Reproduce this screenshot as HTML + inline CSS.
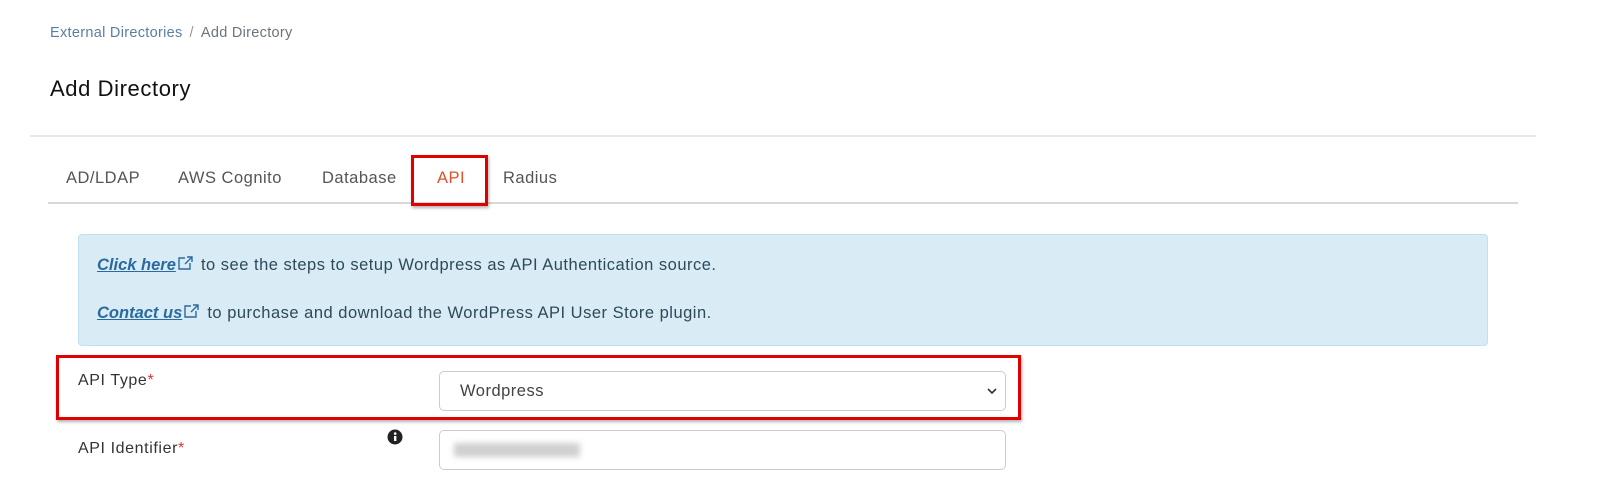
<!DOCTYPE html>
<html><head><meta charset="utf-8"><style>
*{box-sizing:border-box;margin:0;padding:0}
body{width:1609px;height:498px;background:#fff;font-family:"Liberation Sans",sans-serif;position:relative;overflow:hidden;color:#333}
.a{position:absolute;white-space:nowrap}
.bc{top:25px;left:50px;font-size:14.5px;color:#5a7ea3;letter-spacing:.3px}
.bc span{color:#999;margin:0 7px}
.bc b{font-weight:normal;color:#6c757d}
h1{position:absolute;top:76px;left:50px;font-size:22px;font-weight:normal;color:#111;letter-spacing:.6px}
.hr1{top:135px;left:30px;width:1506px;height:2px;background:#e8e8e8}
.hr2{top:202px;left:48px;width:1470px;height:2px;background:#d8d8d8}
.tab{top:169px;font-size:16.5px;color:#555;letter-spacing:.5px}
.red{border:3px solid #e00000;box-shadow:1px 2px 3px rgba(0,0,0,.3)}
.alert{top:234px;left:78px;width:1410px;height:112px;background:#d9ecf5;border:1px solid #bfe0ee;border-radius:4px}
.al{font-size:16.5px;color:#2c4a5a;letter-spacing:.5px}
.al i{color:#2a6a9e;text-decoration:underline;font-weight:bold;letter-spacing:0}
.lbl{font-size:16px;color:#333;letter-spacing:.6px}
.lbl em{color:#d33;font-style:normal}
.inp{left:439px;width:567px;height:40px;border:1px solid #ccc;border-radius:5px;background:#fff}
</style></head><body>
<div class="a bc">External Directories<span>/</span><b>Add Directory</b></div>
<h1>Add Directory</h1>
<div class="a hr1"></div>
<div class="a tab" style="left:66px">AD/LDAP</div>
<div class="a tab" style="left:178px">AWS Cognito</div>
<div class="a tab" style="left:322px">Database</div>
<div class="a tab" style="left:437px;color:#e0502a">API</div>
<div class="a tab" style="left:503px">Radius</div>
<div class="a hr2"></div>
<div class="a red" style="left:411px;top:155px;width:77px;height:51px"></div>
<div class="a alert"></div>
<div class="a al" style="left:97px;top:255px"><i>Click here</i><svg width="20" height="16" viewBox="0 0 20 16" style="vertical-align:-1px"><path d="M9 3H3v11h11V8M11 2h5v5M16 2l-7 7" fill="none" stroke="#2a6a9e" stroke-width="1.4"/></svg> to see the steps to setup Wordpress as API Authentication source.</div>
<div class="a al" style="left:97px;top:303px"><i>Contact us</i><svg width="20" height="16" viewBox="0 0 20 16" style="vertical-align:-1px"><path d="M9 3H3v11h11V8M11 2h5v5M16 2l-7 7" fill="none" stroke="#2a6a9e" stroke-width="1.4"/></svg> to purchase and download the WordPress API User Store plugin.</div>
<div class="a red" style="left:56px;top:355px;width:965px;height:65px"></div>
<div class="a lbl" style="left:78px;top:372px">API Type<em>*</em></div>
<div class="a inp" style="top:371px"><span class="a" style="left:20px;top:10px;font-size:16.5px;color:#444;letter-spacing:.5px">Wordpress</span><svg class="a" style="right:8px;top:15px" width="10" height="8" viewBox="0 0 10 8"><path d="M1 2l4 4 4-4" fill="none" stroke="#333" stroke-width="1.6"/></svg></div>
<svg class="a" style="left:387px;top:429px" width="16" height="16" viewBox="0 0 16 16"><circle cx="8" cy="8" r="7.5" fill="#222"/><rect x="7" y="7" width="2.4" height="5" fill="#fff"/><circle cx="8.2" cy="4.6" r="1.3" fill="#fff"/></svg>
<div class="a lbl" style="left:78px;top:440px">API Identifier<em>*</em></div>
<div class="a inp" style="top:430px"><div class="a" style="left:14px;top:12px;width:126px;height:14px;background:#d0d0d0;filter:blur(3px)"></div></div>
</body></html>
